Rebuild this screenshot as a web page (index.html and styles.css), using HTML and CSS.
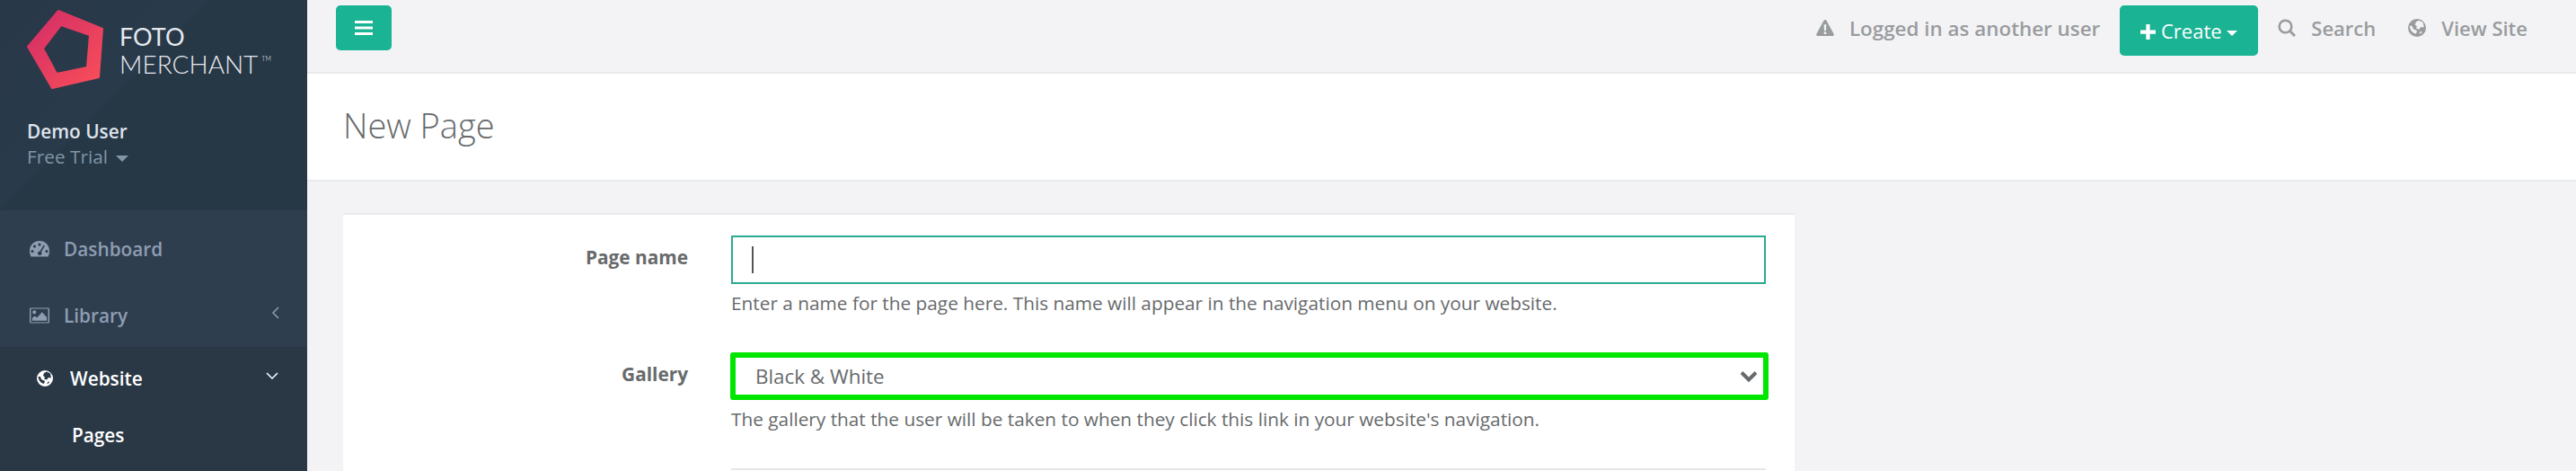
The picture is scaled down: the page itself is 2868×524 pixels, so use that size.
FILE: index.html
```html
<!DOCTYPE html>
<html lang="en">
<head>
    <meta charset="UTF-8">
    <title>New Page</title>
    <link rel="stylesheet" href="styles.css">
</head>
<body>
    <div class="sidebar">
        <div class="profile">
            <div class="brand">
                <svg class="brand-mark" viewBox="0 0 86 90">
                    <defs>
                        <linearGradient id="markGrad" x1="0" y1="0" x2="1" y2="1">
                            <stop offset="0" stop-color="#d02c68"/>
                            <stop offset="1" stop-color="#fb4f58"/>
                        </linearGradient>
                    </defs>
                    <path fill="url(#markGrad)" stroke="url(#markGrad)" stroke-width="2" stroke-linejoin="round" fill-rule="evenodd" d="M35 1 84 21 80 75 28 87 1 41ZM38 17 18 43 33 71 67 64 70 28Z"/>
                </svg>
                <div class="brand-text">
                    <span class="brand-foto">FOTO</span>
                    <span class="brand-merchant">MERCHANT<sup class="brand-tm">TM</sup></span>
                </div>
            </div>
            <div class="user-name">Demo User</div>
            <div class="user-plan">Free Trial <span class="caret"></span></div>
        </div>
        <ul class="nav">
            <li class="nav-item">
                <svg class="nav-icon" viewBox="0 0 22 18"><path fill="currentColor" fill-rule="evenodd" d="M11 0C5 0 0 4.500 0 11c0 2.500.5 4.500 1.500 6.500h19c1-2 1.500-4 1.500-6.500C22 4.500 17 0 11 0ZM11 2.500a1.600 1.600 0 1 1 0 3.200 1.600 1.600 0 0 1 0-3.200ZM5.500 4.500a1.600 1.600 0 1 1 0 3.200 1.600 1.600 0 0 1 0-3.200ZM3 10a1.600 1.600 0 1 1 0 3.200A1.600 1.600 0 0 1 3 10ZM19 10a1.600 1.600 0 1 1 0 3.200 1.600 1.600 0 0 1 0-3.200ZM15.500 4.800l1.400.8-3.900 6.700a2.300 2.300 0 1 1-1.500-.8Z"/></svg>
                <span>Dashboard</span>
            </li>
            <li class="nav-item">
                <svg class="nav-icon" viewBox="0 0 23 18"><path fill="currentColor" fill-rule="evenodd" d="M1.500 0h20A1.500 1.500 0 0 1 23 1.500v15a1.500 1.500 0 0 1-1.500 1.500h-20A1.500 1.500 0 0 1 0 16.500v-15A1.500 1.500 0 0 1 1.500 0ZM1.500 1.200v15.600h20V1.200ZM5.500 3a2.200 2.200 0 1 1 0 4.400 2.200 2.200 0 0 1 0-4.400ZM3 15v-3l3-2.500 2.500 2L14.500 5 20 11v4Z"/></svg>
                <span>Library</span>
                <svg class="nav-arrow" viewBox="0 0 10 14"><path d="M8 1 2 7l6 6" fill="none" stroke="currentColor" stroke-width="1.500"/></svg>
            </li>
            <li class="nav-item nav-active">
                <svg class="nav-icon-small" viewBox="0 0 18 18"><path fill="currentColor" fill-rule="evenodd" d="M9 0a9 9 0 1 1 0 18A9 9 0 0 1 9 0ZM11 1.500 8 3 7 6l2 1.500-1 2 3 1 2-2.500 3 .5-1-5ZM1.500 7C2 11 4 14 8 15l1-3-4-2-1-3ZM11 15l3-1-1-2Z"/></svg>
                <span>Website</span>
                <svg class="nav-arrow nav-arrow-down" viewBox="0 0 14 10"><path d="M1 2l6 6 6-6" fill="none" stroke="currentColor" stroke-width="1.500"/></svg>
            </li>
            <li class="nav-sub">Pages</li>
        </ul>
    </div>

    <div class="main">
        <div class="topbar">
            <button class="menu-btn">
                <svg viewBox="0 0 20 16" class="menu-icon"><path fill="currentColor" d="M0 0h20v3H0zM0 6.500h20v3H0zM0 13h20v3H0z"/></svg>
            </button>
            <div class="topbar-links">
                <span class="top-link top-link-notice">
                    <svg class="top-icon" viewBox="0 0 22 20"><path fill="currentColor" fill-rule="evenodd" d="M11 0c.7 0 1.300.4 1.600 1l9 16.500c.6 1.200-.2 2.500-1.600 2.500H2C.6 20-.2 18.700.4 17.500l9-16.500C9.700.4 10.300 0 11 0ZM9.500 6l.4 7.500h2.200L12.500 6ZM9.600 15v2.600h2.800V15Z"/></svg>
                    Logged in as another user
                </span>
                <button class="create-btn"><svg class="plus-icon" viewBox="0 0 16 16"><path fill="currentColor" d="M6 0h4v6h6v4h-6v6H6v-6H0V6h6z"/></svg> Create <span class="caret"></span></button>
                <span class="top-link">
                    <svg class="top-icon" viewBox="0 0 20 20"><circle cx="8.500" cy="8.500" r="6.800" fill="none" stroke="currentColor" stroke-width="2.600"/><path d="M13.500 13.500 19 19" stroke="currentColor" stroke-width="3"/></svg>
                    Search
                </span>
                <span class="top-link">
                    <svg class="top-icon" viewBox="0 0 18 18"><path fill="currentColor" fill-rule="evenodd" d="M9 0a9 9 0 1 1 0 18A9 9 0 0 1 9 0ZM11 1.500 8 3 7 6l2 1.500-1 2 3 1 2-2.500 3 .5-1-5ZM1.500 7C2 11 4 14 8 15l1-3-4-2-1-3ZM11 15l3-1-1-2Z"/></svg>
                    View Site
                </span>
            </div>
        </div>
        <div class="page-heading">
            <h1>New Page</h1>
        </div>
        <div class="content">
            <form class="card">
                <div class="form-row">
                    <label class="form-label">Page name</label>
                    <div class="form-field">
                        <div class="text-input"><span class="text-cursor"></span></div>
                        <p class="help">Enter a name for the page here. This name will appear in the navigation menu on your website.</p>
                    </div>
                </div>
                <div class="form-row">
                    <label class="form-label">Gallery</label>
                    <div class="form-field">
                        <div class="select-input">
                            <span>Black &amp; White</span>
                            <svg class="select-arrow" viewBox="0 0 20 14"><path d="M2 2.500l8 8 8-8" fill="none" stroke="currentColor" stroke-width="4"/></svg>
                        </div>
                        <p class="help">The gallery that the user will be taken to when they click this link in your website's navigation.</p>
                    </div>
                </div>
                <div class="form-row">
                    <div class="form-label"></div>
                    <div class="form-field"><div class="next-field"></div></div>
                </div>
            </form>
        </div>
    </div>
</body>
</html>
```

FILE: styles.css
```css
html, body {
    height: 524px;
    overflow: hidden;
}
body {
    margin: 0;
    display: flex;
    font-family: "Open Sans", sans-serif;
    font-size: 20.8px;
    color: #676a6c;
    background-color: #f3f3f5;
}
.sidebar {
    width: 342px;
    flex-shrink: 0;
    background-color: #2a3846;
}
.profile {
    height: 234px;
    box-sizing: border-box;
    padding: 12px 30px 0;
    background: linear-gradient(135deg, #283848 0%, #293a4b 40%, #263746 41%, #263746 100%);
}
.brand {
    display: flex;
    align-items: center;
    height: 88px;
}
.brand-mark {
    width: 86px;
    height: 90px;
    flex-shrink: 0;
}
.brand-text {
    display: flex;
    flex-direction: column;
    margin-left: 17px;
    color: #e6e9ec;
    font-family: Lato, sans-serif;
    line-height: 30px;
}
.brand-foto {
    font-size: 27px;
    font-weight: 400;
}
.brand-merchant {
    font-size: 28px;
    font-weight: 300;
}
.brand-tm {
    font-size: 7px;
    vertical-align: 14px;
    line-height: 0;
    margin-left: 4px;
}
.user-name {
    margin-top: 32px;
    color: #dfe4ed;
    font-weight: 600;
    line-height: 28px;
}
.user-plan {
    color: #8095a8;
    line-height: 28px;
}
.caret {
    display: inline-block;
    vertical-align: middle;
    margin-left: 4px;
    border-top: 7px solid;
    border-left: 7px solid transparent;
    border-right: 7px solid transparent;
}
.nav {
    list-style: none;
    margin: 0;
    padding: 0;
}
.nav-item {
    display: flex;
    align-items: center;
    height: 74px;
    box-sizing: border-box;
    padding: 3px 30px 0 33px;
    background-color: #2f3e4f;
    color: #8e9db1;
    font-weight: 600;
}
.nav-item:first-child {
    height: 78px;
    padding-top: 7px;
}
.nav-item span {
    margin-left: 16px;
}
.nav-icon {
    width: 22px;
    height: 18px;
}
.nav-arrow {
    margin-left: auto;
    width: 10px;
    height: 14px;
    margin-top: -6px;
}
.nav-active {
    padding: 0 32px 0 41px;
    background-color: transparent;
    color: #fff;
    height: 70px;
}
.nav-icon-small {
    width: 18px;
    height: 18px;
}
.nav-active span {
    margin-left: 19px;
}
.nav-arrow-down {
    width: 14px;
    height: 10px;
}
.nav-sub {
    padding: 13px 0 0 80px;
    color: #fff;
    font-weight: 600;
    line-height: 30px;
}
.main {
    flex: 1;
    min-width: 0;
}
.topbar {
    display: flex;
    align-items: center;
    justify-content: space-between;
    height: 80px;
    box-sizing: border-box;
    padding: 6px 54px 18px 32px;
}
.menu-btn {
    width: 62px;
    height: 50px;
    margin-bottom: 6px;
    border: none;
    border-radius: 5px;
    background-color: #1ab394;
    color: #fff;
    display: flex;
    align-items: center;
    justify-content: center;
    padding: 0;
}
.menu-icon {
    width: 20px;
    height: 16px;
}
.topbar-links {
    display: flex;
    align-items: center;
    color: #999c9e;
    font-size: 22px;
    font-weight: 600;
}
.top-link {
    display: flex;
    align-items: center;
    gap: 17px;
    margin-left: 36px;
    margin-bottom: 6px;
}
.top-link:first-child {
    margin-left: 0;
}
.top-link-notice {
    font-size: 22.4px;
}
.create-btn + .top-link {
    margin-left: 22px;
}
.top-icon {
    width: 20px;
    height: 20px;
}
.create-btn {
    height: 56px;
    width: 154px;
    margin-left: 22px;
    border: none;
    border-radius: 5px;
    background-color: #1ab394;
    color: #fff;
    font-family: "Open Sans", sans-serif;
    font-size: 22px;
    font-weight: 400;
    padding: 0;
}
.create-btn .caret {
    margin-left: 0;
    border-top-width: 6px;
    border-left-width: 6px;
    border-right-width: 6px;
}
.plus-icon {
    width: 17px;
    height: 17px;
    vertical-align: -1px;
}
.page-heading {
    height: 122px;
    box-sizing: border-box;
    border-top: 2px solid #e7eaec;
    border-bottom: 2px solid #e7eaec;
    background-color: #fff;
    padding: 0 40px;
    display: flex;
    align-items: center;
}
.page-heading h1 {
    margin: 0 0 4px;
    font-size: 38px;
    font-weight: 300;
}
.content {
    padding: 35px 40px 0;
}
.card {
    width: 1616px;
    box-sizing: border-box;
    background-color: #fff;
    border-top: 2px solid #e7eaec;
    padding-top: 23px;
}
.form-row {
    display: flex;
    gap: 48px;
    margin-bottom: 40px;
}
.form-row:last-child {
    margin-bottom: 0;
}
.form-label {
    width: 384px;
    flex-shrink: 0;
    text-align: right;
    font-weight: 700;
    line-height: 30px;
    padding-top: 9px;
}
.form-field {
    width: 1152px;
}
.text-input {
    height: 54px;
    box-sizing: border-box;
    border: 2px solid #2baa92;
    display: flex;
    align-items: center;
    padding-left: 21px;
}
.text-cursor {
    width: 2px;
    height: 30px;
    background-color: #555;
}
.help {
    margin: 6px 0 0;
    line-height: 30px;
}
.select-input {
    height: 53px;
    width: 1156px;
    margin-left: -1px;
    box-sizing: border-box;
    border: 6px solid #00e600;
    border-radius: 3px;
    display: flex;
    align-items: center;
    justify-content: space-between;
    padding: 0 6px 0 22px;
    font-size: 22.4px;
}
.select-arrow {
    width: 20px;
    height: 14px;
}
.next-field {
    height: 0;
    border-top: 2px solid #e5e6e7;
}
```
